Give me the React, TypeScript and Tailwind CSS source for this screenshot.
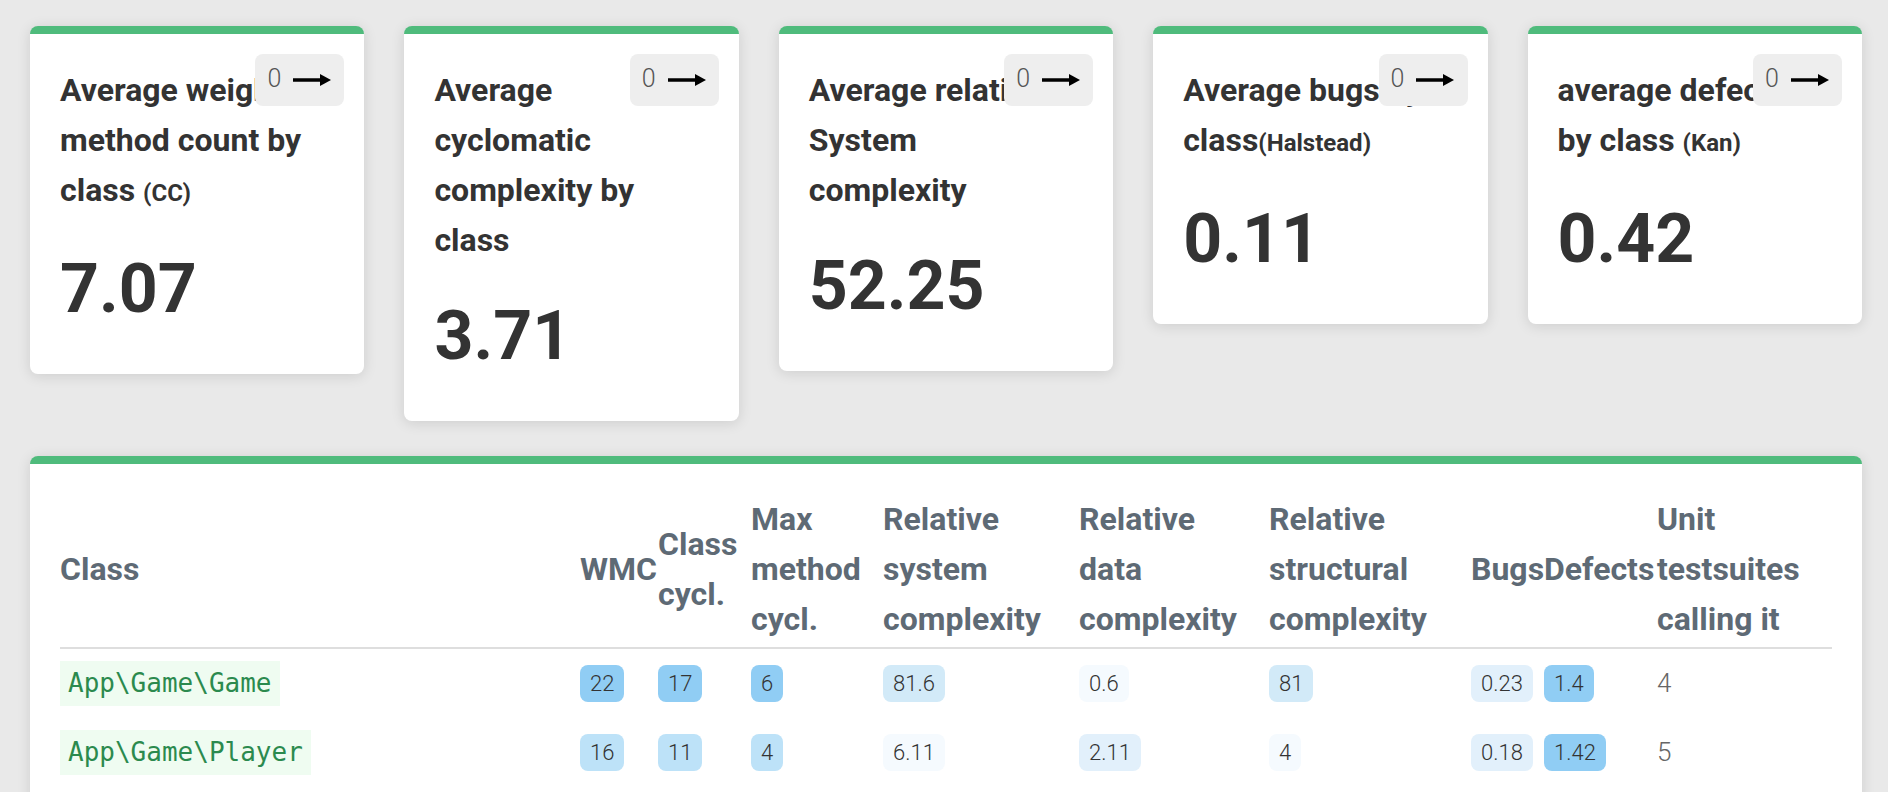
import React from 'react';

type Card = {
  title: React.ReactNode;
  value: string;
};

const cards: Card[] = [
  {
    title: (
      <>
        Average weighted<br />method count by<br />class <span className="text-[24px]">(CC)</span>
      </>
    ),
    value: '7.07',
  },
  {
    title: (
      <>
        Average<br />cyclomatic<br />complexity by<br />class
      </>
    ),
    value: '3.71',
  },
  {
    title: (
      <>
        Average relative<br />System<br />complexity
      </>
    ),
    value: '52.25',
  },
  {
    title: (
      <>
        Average bugs by<br />class<span className="text-[24px]">(Halstead)</span>
      </>
    ),
    value: '0.11',
  },
  {
    title: (
      <>
        average defects<br />by class <span className="text-[24px]">(Kan)</span>
      </>
    ),
    value: '0.42',
  },
];

const Arrow = () => (
  <svg width="38" height="14" viewBox="0 0 38 14">
    <line x1="0" y1="7" x2="29" y2="7" stroke="#000" strokeWidth="3.5" />
    <polygon points="27,1 38,7 27,13" fill="#000" />
  </svg>
);

const MetricCard = ({ title, value }: Card) => (
  <div className="relative bg-white rounded-lg border-t-8 border-[#4fbb7c] shadow-[0_2px_14px_rgba(0,0,0,0.12)] px-[30px] pt-[31px] pb-[45px]">
    <div className="text-[32px] leading-[50px] font-bold text-[#333333]">{title}</div>
    <div className="mt-[31px] text-[68px] leading-[80px] font-bold text-[#333333]">{value}</div>
    <button className="absolute top-[20px] right-[20px] w-[89px] h-[52px] rounded-lg bg-[#eeeeee] flex items-center pl-[12px] gap-[12px]">
      <span className="text-[25px] font-light text-[#555555] leading-none -mt-[4px]">0</span>
      <Arrow />
    </button>
  </div>
);

// badge background by intensity
const shade: Record<string, string> = {
  a: 'bg-[#90cdf4]',
  b: 'bg-[#bde2f8]',
  c: 'bg-[#d2eaf8]',
  d: 'bg-[#e2f0fb]',
  e: 'bg-[#f5fafe]',
};

const Badge = ({ v, s }: { v: string; s: string }) => (
  <span className={`inline-flex items-center h-[37px] px-[10px] rounded-lg text-[22px] font-light text-[#333333] ${shade[s]}`}>
    {v}
  </span>
);

type Row = {
  name: string;
  cells: [string, string][];
  bugs: [string, string];
  defects: [string, string];
  tests: string;
};

const rows: Row[] = [
  {
    name: 'App\\Game\\Game',
    cells: [
      ['22', 'a'],
      ['17', 'a'],
      ['6', 'a'],
      ['81.6', 'c'],
      ['0.6', 'e'],
      ['81', 'c'],
    ],
    bugs: ['0.23', 'd'],
    defects: ['1.4', 'a'],
    tests: '4',
  },
  {
    name: 'App\\Game\\Player',
    cells: [
      ['16', 'b'],
      ['11', 'b'],
      ['4', 'b'],
      ['6.11', 'e'],
      ['2.11', 'd'],
      ['4', 'e'],
    ],
    bugs: ['0.18', 'd'],
    defects: ['1.42', 'a'],
    tests: '5',
  },
];

const cols =
  'grid grid-cols-[520px_78px_93px_132px_196px_190px_202px_73px_113px_175px]';

export default function App() {
  return (
    <div className="min-h-screen bg-[#e9e9e9] pl-[30px] pr-[26px] pt-[26px] pb-10 font-['Roboto',sans-serif]">
      <div className="grid grid-cols-5 gap-10 items-start">
        {cards.map((c, i) => (
          <MetricCard key={i} {...c} />
        ))}
      </div>

      <div className="mt-[35px] bg-white rounded-lg border-t-8 border-[#4fbb7c] shadow-[0_2px_14px_rgba(0,0,0,0.12)] px-[30px] pt-[30px] pb-8">
        <div className={`${cols} items-center pb-[3px] border-b-2 border-[#dedede] text-[32px] leading-[50px] font-bold text-[#5e6a75]`}>
          <div>Class</div>
          <div>WMC</div>
          <div>Class<br />cycl.</div>
          <div>Max<br />method<br />cycl.</div>
          <div>Relative<br />system<br />complexity</div>
          <div>Relative<br />data<br />complexity</div>
          <div>Relative<br />structural<br />complexity</div>
          <div>Bugs</div>
          <div>Defects</div>
          <div>Unit<br />testsuites<br />calling it</div>
        </div>
        {rows.map((r) => (
          <div key={r.name} className={`${cols} items-center h-[69px]`}>
            <div>
              <span className="inline-flex items-center h-[45px] px-[8px] bg-[#effcf1] text-[#2b8a4e] text-[26px] font-['DejaVu_Sans_Mono',monospace]">
                {r.name}
              </span>
            </div>
            {r.cells.map(([v, s], i) => (
              <div key={i}>
                <Badge v={v} s={s} />
              </div>
            ))}
            <div>
              <Badge v={r.bugs[0]} s={r.bugs[1]} />
            </div>
            <div>
              <Badge v={r.defects[0]} s={r.defects[1]} />
            </div>
            <div className="text-[26px] font-light text-[#666666]">{r.tests}</div>
          </div>
        ))}
      </div>
    </div>
  );
}
